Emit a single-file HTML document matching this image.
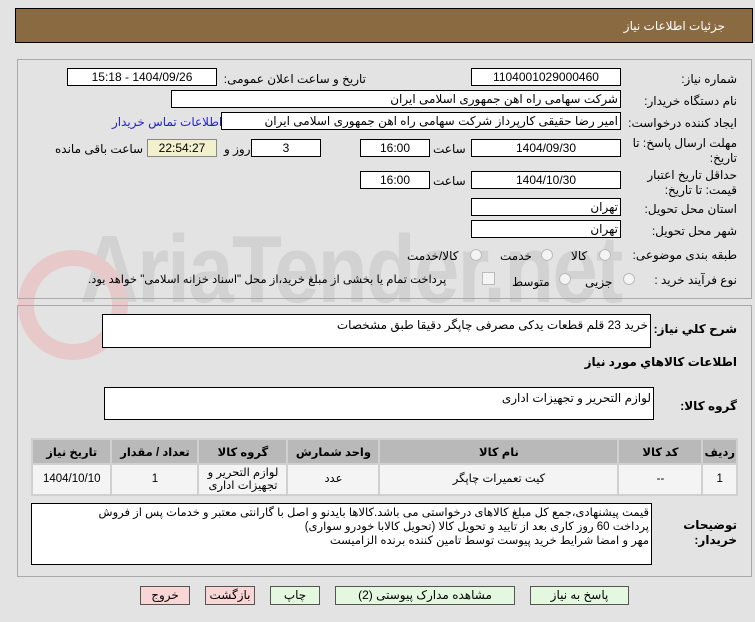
<!DOCTYPE html>
<html><head><meta charset="utf-8"><style>
body{margin:0;width:755px;height:622px;background:#e3e3e3;font-family:"Liberation Sans","DejaVu Sans",sans-serif;font-size:12px;color:#000;position:relative;overflow:hidden}
.a{position:absolute}
.box{position:absolute;background:#fff;border:1px solid #000;box-sizing:border-box;direction:rtl;padding:0 2px;line-height:16px;font-size:12px;white-space:nowrap;overflow:hidden}
.c{text-align:center}
.l{position:absolute;direction:rtl;white-space:nowrap;font-size:12px;line-height:14px}
.panel{position:absolute;border:1px solid #a9a9a9;box-sizing:border-box}
.rad{position:absolute;width:10px;height:10px;border:1px solid #bbb;border-radius:50%;background:#f4f4f4}
table{border-collapse:separate;border-spacing:2px;background:#d0d0d0}
th{background:#b9b9b9;font-size:11.5px;height:21px;font-weight:bold}
td{background:#f4f4f4;text-align:center;font-size:11.5px;height:27px;line-height:13px}
.btn{position:absolute;border:1px solid #555;box-sizing:border-box;text-align:center;font-size:12px;line-height:16px;height:19px}
</style></head><body>
<div class="a" style="left:15px;top:8px;width:738px;height:35px;background:#8a6a41;border:1px solid #000;box-sizing:border-box"></div>
<div class="l" style="right:30px;top:19px;color:#fff;font-size:12px">جزئیات اطلاعات نیاز</div>

<div class="a" style="left:80px;top:215px;font-size:96px;font-weight:bold;color:#d2d2d2;letter-spacing:-2px;transform:scaleX(0.85);transform-origin:left top">AriaTender.net</div>
<div class="a" style="left:18px;top:250px;width:110px;height:110px;border:16px solid #e8c9c9;border-radius:50%;box-sizing:border-box"></div>

<div class="panel" style="left:17px;top:59px;width:735px;height:240px"></div>
<div class="l" style="right:18px;top:72px">شماره نیاز:</div>
<div class="box c" style="left:471px;top:68px;width:150px;height:18px">1104001029000460</div>
<div class="l" style="right:389px;top:72px">تاریخ و ساعت اعلان عمومی:</div>
<div class="box c" style="left:67px;top:68px;width:150px;height:18px">1404/09/26 - 15:18</div>

<div class="l" style="right:18px;top:94px">نام دستگاه خریدار:</div>
<div class="box" style="left:171px;top:90px;width:450px;height:18px">شرکت سهامی راه اهن جمهوری اسلامی ایران</div>

<div class="l" style="right:18px;top:116px">ایجاد کننده درخواست:</div>
<div class="box" style="left:221px;top:112px;width:400px;height:18px">امیر رضا  حقیقی کارپرداز شرکت سهامی راه اهن جمهوری اسلامی ایران</div>
<div class="l" style="left:112px;top:115px;color:#2222cc">اطلاعات تماس خریدار</div>

<div class="l" style="right:18px;top:136px">مهلت ارسال پاسخ: تا</div>
<div class="l" style="right:18px;top:151px">تاریخ:</div>
<div class="box c" style="left:471px;top:139px;width:150px;height:18px">1404/09/30</div>
<div class="l" style="left:433px;top:142px">ساعت</div>
<div class="box c" style="left:360px;top:139px;width:70px;height:18px">16:00</div>
<div class="box c" style="left:251px;top:139px;width:70px;height:18px">3</div>
<div class="l" style="left:224px;top:142px">روز و</div>
<div class="box c" style="left:147px;top:139px;width:70px;height:18px;background:#f3f0cd;border-color:#888">22:54:27</div>
<div class="l" style="left:55px;top:142px">ساعت باقی مانده</div>

<div class="l" style="right:18px;top:168px">حداقل تاریخ اعتبار</div>
<div class="l" style="right:18px;top:183px">قیمت: تا تاریخ:</div>
<div class="box c" style="left:471px;top:171px;width:150px;height:18px">1404/10/30</div>
<div class="l" style="left:433px;top:174px">ساعت</div>
<div class="box c" style="left:360px;top:171px;width:70px;height:18px">16:00</div>

<div class="l" style="right:18px;top:202px">استان محل تحویل:</div>
<div class="box" style="left:471px;top:198px;width:150px;height:18px">تهران</div>
<div class="l" style="right:18px;top:224px">شهر محل تحویل:</div>
<div class="box" style="left:471px;top:220px;width:150px;height:18px">تهران</div>

<div class="l" style="right:18px;top:248px">طبقه بندی موضوعی:</div>
<div class="rad" style="left:599px;top:249px"></div><div class="l" style="left:571px;top:249px">کالا</div>
<div class="rad" style="left:541px;top:249px"></div><div class="l" style="left:500px;top:249px">خدمت</div>
<div class="rad" style="left:470px;top:249px"></div><div class="l" style="left:407px;top:249px">کالا/خدمت</div>

<div class="l" style="right:18px;top:273px">نوع فرآیند خرید :</div>
<div class="rad" style="left:623px;top:273px"></div><div class="l" style="left:585px;top:275px">جزیی</div>
<div class="rad" style="left:559px;top:273px"></div><div class="l" style="left:512px;top:275px">متوسط</div>
<div class="a" style="left:482px;top:272px;width:11px;height:11px;border:1px solid #bbb;background:#f4f4f4"></div>
<div class="l" style="left:88px;top:273px;font-size:11.5px">پرداخت تمام یا بخشی از مبلغ خرید،از محل "اسناد خزانه اسلامی" خواهد بود.</div>

<div class="panel" style="left:17px;top:305px;width:735px;height:272px"></div>
<div class="l" style="right:18px;top:322px;font-weight:bold">شرح کلي نياز:</div>
<div class="box" style="left:102px;top:314px;width:549px;height:34px;padding-top:2px">خرید 23 قلم قطعات یدکی مصرفی چاپگر دقیقا طبق مشخصات</div>
<div class="l" style="right:18px;top:355px;font-weight:bold">اطلاعات کالاهاي مورد نياز</div>
<div class="l" style="right:18px;top:399px;font-weight:bold">گروه کالا:</div>
<div class="box" style="left:104px;top:387px;width:550px;height:33px;padding-top:2px">لوازم التحریر و تجهیزات اداری</div>

<table class="a" style="left:31px;top:438px;width:707px;direction:rtl">
<tr><th style="width:26px">ردیف</th><th style="width:80px">کد کالا</th><th style="width:235px">نام کالا</th><th style="width:88px">واحد شمارش</th><th style="width:85px">گروه کالا</th><th style="width:83px">تعداد / مقدار</th><th>تاریخ نیاز</th></tr>
<tr><td>1</td><td>--</td><td>کیت تعمیرات چاپگر</td><td>عدد</td><td>لوازم التحریر و<br>تجهیزات اداری</td><td>1</td><td>1404/10/10</td></tr>
</table>

<div class="l" style="right:18px;top:518px;font-weight:bold">توضیحات</div>
<div class="l" style="right:18px;top:533px;font-weight:bold">خریدار:</div>
<div class="box" style="left:31px;top:503px;width:621px;height:62px;line-height:14px;padding-top:2px;font-size:11.5px;white-space:normal">قیمت پیشنهادی،جمع کل مبلغ کالاهای درخواستی می باشد.کالاها بایدنو و اصل با گارانتی معتبر و خدمات پس از فروش<br>پرداخت 60 روز کاری بعد از تایید و تحویل کالا (تحویل کالابا خودرو سواری)<br>مهر و امضا شرایط خرید پیوست توسط تامین کننده برنده الزامیست</div>

<div class="btn" style="left:530px;top:586px;width:99px;background:#e3f8de">پاسخ به نیاز</div>
<div class="btn" style="left:335px;top:586px;width:180px;background:#e3f8de">مشاهده مدارک پیوستی (2)</div>
<div class="btn" style="left:270px;top:586px;width:50px;background:#e3f8de">چاپ</div>
<div class="btn" style="left:205px;top:586px;width:50px;background:#f9d6d6">بازگشت</div>
<div class="btn" style="left:140px;top:586px;width:50px;background:#f9d6d6">خروج</div>
</body></html>
